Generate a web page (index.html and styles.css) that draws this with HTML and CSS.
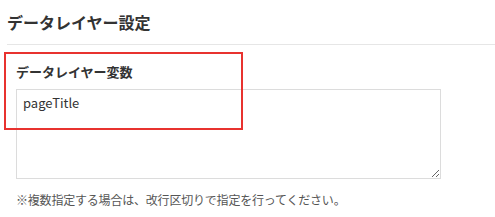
FILE: index.html
```html
<!DOCTYPE html>
<html lang="ja">
<head>
<meta charset="utf-8">
<link rel="stylesheet" href="styles.css">
</head>
<body>
<div class="page">
  <header class="page-header">
    <h1 class="page-title">データレイヤー設定</h1>
  </header>
  <section class="field">
    <label class="field-label">データレイヤー変数</label>
    <textarea class="field-input">pageTitle</textarea>
    <p class="field-note">※複数指定する場合は、改行区切りで指定を行ってください。</p>
  </section>
  <div class="highlight"></div>
</div>
</body>
</html>
```
FILE: styles.css
```css
html, body {
  margin: 0;
  padding: 0;
  background: #fff;
}
body {
  font-family: "Noto Sans CJK JP", "Noto Sans", sans-serif;
  color: #333;
}
.page {
  position: relative;
  width: 495px;
  height: 217px;
  overflow: hidden;
}
.page-header {
  margin-left: 7px;
  border-bottom: 1px solid #e6e6e6;
  padding: 10px 0 10px;
}
.page-title {
  margin: 0;
  font-size: 16px;
  line-height: 24px;
  font-weight: bold;
  color: #333;
}
.field {
  padding: 18px 0 0 16px;
}
.field-label {
  display: block;
  font-size: 13px;
  line-height: 18px;
  font-weight: bold;
  color: #333;
  margin-bottom: 8px;
}
.field-input {
  display: block;
  box-sizing: border-box;
  width: 425px;
  height: 90px;
  margin: 0;
  padding: 4px 6px;
  border: 1px solid #dcdcdc;
  border-radius: 0;
  font-family: "Noto Sans CJK JP", "Noto Sans", sans-serif;
  font-size: 13px;
  line-height: 18px;
  color: #333;
  resize: both;
  outline: none;
}
.field-note {
  margin: 12px 0 0;
  font-size: 12px;
  line-height: 18px;
  letter-spacing: -0.2px;
  color: #555;
}
.highlight {
  position: absolute;
  left: 4px;
  top: 52px;
  width: 235px;
  height: 74px;
  border: 2px solid #e8322f;
  pointer-events: none;
}
```
